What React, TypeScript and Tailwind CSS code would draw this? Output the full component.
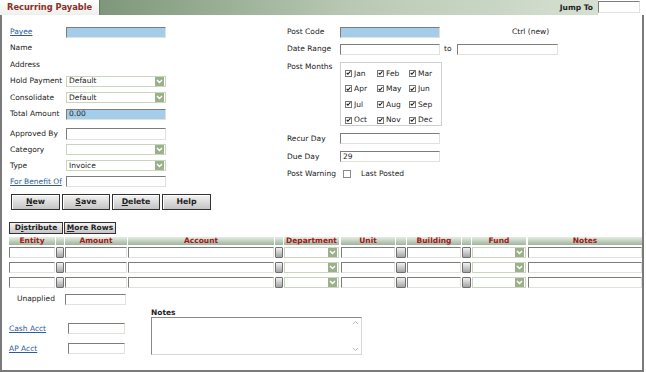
import type { ReactNode } from "react";

const edge =
  "border border-t-[#7d7d7d] border-l-[#7d7d7d] border-b-[#e2e2dc] border-r-[#e2e2dc]";

function Field({ w, h = 11, blue, value }: { w: number; h?: number; blue?: boolean; value?: string }) {
  return (
    <div
      className={`${edge} ${blue ? "bg-[#a3cdea]" : "bg-white"} flex shrink-0 items-center pl-[2px] text-[7.5px] leading-none`}
      style={{ width: w, height: h }}
    >
      {value}
    </div>
  );
}

function Arrow() {
  return (
    <span className="flex h-[9px] w-[9px] items-center justify-center bg-[#9cb18b]">
      <svg width="7" height="5" viewBox="0 0 7 5">
        <path d="M1 1 L3.5 3.5 L6 1" stroke="#fff" strokeWidth="1.4" fill="none" />
      </svg>
    </span>
  );
}

function Select({ w, value }: { w: number; value?: string }) {
  return (
    <div
      className="flex h-[11px] shrink-0 items-center justify-between border border-[#c9d6bd] bg-white pl-[2px] pr-[1px] text-[7.5px] leading-none"
      style={{ width: w }}
    >
      <span>{value}</span>
      <Arrow />
    </div>
  );
}

function Lookup({ w = 8 }: { w?: number }) {
  return (
    <div
      className="h-[11px] shrink-0 rounded-[1px] border border-[#6f6f6f] bg-gradient-to-b from-[#f2f2f2] to-[#a5a5a5]"
      style={{ width: w }}
    />
  );
}

function Btn({ w, children }: { w: number; children: ReactNode }) {
  return (
    <div
      className="flex h-[16px] items-center justify-center border border-[#333] bg-gradient-to-b from-[#f4f4f4] to-[#c4c4c4] text-[7.8px] font-bold shadow-[inset_1px_1px_0_#fff]"
      style={{ width: w }}
    >
      {children}
    </div>
  );
}

function Link({ children }: { children: ReactNode }) {
  return <span className="text-[#2d5b9c] underline">{children}</span>;
}

function Row({ label, children, h = 16, mt = 0, lw = 56 }: { label: ReactNode; children?: ReactNode; h?: number; mt?: number; lw?: number }) {
  return (
    <div className="flex items-center" style={{ height: h, marginTop: mt }}>
      <div className="shrink-0 whitespace-nowrap" style={{ width: lw }}>
        {label}
      </div>
      {children}
    </div>
  );
}

function Check({ on, label }: { on?: boolean; label?: string }) {
  return (
    <div className="flex w-[33px] items-center gap-[2px]">
      <span className="flex h-[7px] w-[7px] items-center justify-center border border-[#777] bg-white">
        {on && (
          <svg width="6" height="6" viewBox="0 0 6 6">
            <path d="M0.8 2.8 L2.3 4.5 L5.3 0.9" stroke="#111" strokeWidth="1.3" fill="none" />
          </svg>
        )}
      </span>
      {label && <span>{label}</span>}
    </div>
  );
}

function Hd({ w, children }: { w: number; children?: ReactNode }) {
  return (
    <div
      className="flex h-[8px] shrink-0 items-center justify-center bg-gradient-to-b from-[#e6ede3] to-[#9fb59c] text-[7.5px] font-bold leading-none text-[#a3161a]"
      style={{ width: w }}
    >
      {children}
    </div>
  );
}

const months = [
  ["Jan", "Feb", "Mar"],
  ["Apr", "May", "Jun"],
  ["Jul", "Aug", "Sep"],
  ["Oct", "Nov", "Dec"],
];

function GridRow() {
  return (
    <div className="flex items-center gap-[1px]">
      <Field w={46} />
      <Lookup />
      <Field w={62} />
      <Field w={146} />
      <Lookup />
      <Select w={55} />
      <div className="w-[1px]" />
      <Field w={54} />
      <Lookup w={10} />
      <Field w={54} />
      <Lookup w={9} />
      <Select w={54} />
      <div className="w-[3px]" />
      <Field w={114} />
    </div>
  );
}

export default function App() {
  return (
    <div
      className="relative h-[372px] w-[646px] overflow-hidden bg-white text-[7.5px] leading-none text-[#222]"
      style={{ fontFamily: '"DejaVu Sans", Verdana, sans-serif' }}
    >
      {/* title bar */}
      <div className="flex h-[15px]">
        <div className="flex w-[100px] items-center border-r border-[#6a7d66] bg-gradient-to-b from-white to-[#eef0ec] pl-[7px] text-[8.3px] font-bold text-[#8b2f2a]">
          Recurring Payable
        </div>
        <div className="flex flex-1 items-center justify-end bg-gradient-to-r from-[#7e977a] via-[#b9c8b4] to-[#d6e0d1] pr-[5px] text-[7.5px] font-bold">
          Jump To
        </div>
        <div className="flex w-[48px] items-start pt-[1px]">
          <div className={`${edge} h-[12px] w-[42px] bg-white`} />
        </div>
      </div>

      {/* frame */}
      <div className="h-[357px] w-[644px] border-b-2 border-l-2 border-r-2 border-[#7a7a7a]">
        <div className="flex">
          {/* left column */}
          <div className="w-[278px] pl-[8px] pt-[9px]">
            <Row label={<Link>Payee</Link>}>
              <Field w={100} blue />
            </Row>
            <Row label="Name" />
            <Row label="Address" mt={0.5} />
            <Row label="Hold Payment" mt={0.5}>
              <Select w={100} value="Default" />
            </Row>
            <Row label="Consolidate" mt={0.5}>
              <Select w={100} value="Default" />
            </Row>
            <Row label="Total Amount" mt={0.5}>
              <Field w={100} blue value="0.00" />
            </Row>
            <Row label="Approved By" mt={3.5}>
              <Field w={100} h={12} />
            </Row>
            <Row label="Category">
              <Select w={100} />
            </Row>
            <Row label="Type">
              <Select w={100} value="Invoice" />
            </Row>
            <Row label={<Link>For Benefit Of</Link>}>
              <Field w={100} />
            </Row>
            <div className="mt-[4px] flex gap-[2px] pl-[1px]">
              <Btn w={49}>
                <span className="underline">N</span>ew
              </Btn>
              <Btn w={48}>
                <span className="underline">S</span>ave
              </Btn>
              <Btn w={48}>
                <span className="underline">D</span>elete
              </Btn>
              <Btn w={49}>Help</Btn>
            </div>
          </div>

          {/* right column */}
          <div className="flex-1 pl-[7px] pt-[9px]">
            <Row label="Post Code" lw={53}>
              <Field w={100} blue />
              <span className="ml-[72px]">Ctrl (new)</span>
            </Row>
            <Row label="Date Range" lw={53} mt={1}>
              <Field w={100} />
              <span className="ml-[4px] w-[13px]">to</span>
              <Field w={101} />
            </Row>
            <div className="mt-[5px] flex">
              <div className="w-[53px] shrink-0 pt-[1px]">Post Months</div>
              <div className="h-[64px] w-[102px] border border-[#cfcfcf] pl-[4px] pt-[2.5px]">
                {months.map((r) => (
                  <div key={r[0]} className="flex h-[15.6px] items-center">
                    {r.map((m) => (
                      <Check key={m} on label={m} />
                    ))}
                  </div>
                ))}
              </div>
            </div>
            <Row label="Recur Day" lw={53} h={18} mt={3.5}>
              <Field w={100} />
            </Row>
            <Row label="Due Day" lw={53} h={18}>
              <Field w={100} value="29" />
            </Row>
            <Row label="Post Warning" lw={53} h={17}>
              <span className="ml-[3px] h-[8px] w-[8px] border border-[#8a8a8a] bg-white" />
              <span className="ml-[10px]">Last Posted</span>
            </Row>
          </div>
        </div>

        {/* distribution grid */}
        <div className="mt-[12px] pl-[7px]">
          <div className="flex gap-[1px]">
            <div className="flex h-[12px] w-[54px] items-center justify-center border border-[#333] bg-gradient-to-b from-[#f4f4f4] to-[#c4c4c4] text-[7.5px] font-bold">
              D<span className="underline">i</span>stribute
            </div>
            <div className="flex h-[12px] w-[52px] items-center justify-center border border-[#333] bg-gradient-to-b from-[#f4f4f4] to-[#c4c4c4] text-[7.5px] font-bold">
              <span className="underline">M</span>ore Rows
            </div>
          </div>
          <div className="mt-[3px] flex gap-[1px]">
            <Hd w={46}>Entity</Hd>
            <Hd w={8} />
            <Hd w={62}>Amount</Hd>
            <Hd w={146}>Account</Hd>
            <Hd w={8} />
            <Hd w={55}>Department</Hd>
            <div className="w-[1px]" />
            <Hd w={54}>Unit</Hd>
            <Hd w={10} />
            <Hd w={54}>Building</Hd>
            <Hd w={9} />
            <Hd w={54}>Fund</Hd>
            <div className="w-[3px]" />
            <Hd w={114}>Notes</Hd>
          </div>
          <div className="mt-[2px] flex flex-col gap-[4px]">
            <GridRow />
            <GridRow />
            <GridRow />
          </div>
        </div>

        {/* bottom section */}
        <div className="mt-[6px] flex pl-[7px]">
          <div className="w-[142px]">
            <div className="flex h-[11px] items-center">
              <span className="w-[56px] pl-[8px]">Unapplied</span>
              <Field w={61} />
            </div>
            <div className="mt-[18px] flex h-[12px] items-center">
              <span className="w-[59px]">
                <Link>Cash Acct</Link>
              </span>
              <Field w={57} />
            </div>
            <div className="mt-[8px] flex h-[12px] items-center">
              <span className="w-[59px]">
                <Link>AP Acct</Link>
              </span>
              <Field w={57} />
            </div>
          </div>
          <div className="pt-[15px]">
            <div className="font-bold">Notes</div>
            <div className="mt-[1px] flex h-[38px] w-[211px] justify-end border border-[#8a8a86] border-b-[#d8d8d0] border-r-[#d8d8d0] bg-white">
              <div className="flex w-[9px] flex-col justify-between py-[2px]">
                <svg width="7" height="5" viewBox="0 0 7 5">
                  <path d="M1 4 L3.5 1.5 L6 4" stroke="#bbb" strokeWidth="1" fill="none" />
                </svg>
                <svg width="7" height="5" viewBox="0 0 7 5">
                  <path d="M1 1 L3.5 3.5 L6 1" stroke="#bbb" strokeWidth="1" fill="none" />
                </svg>
              </div>
            </div>
          </div>
        </div>
      </div>
    </div>
  );
}
